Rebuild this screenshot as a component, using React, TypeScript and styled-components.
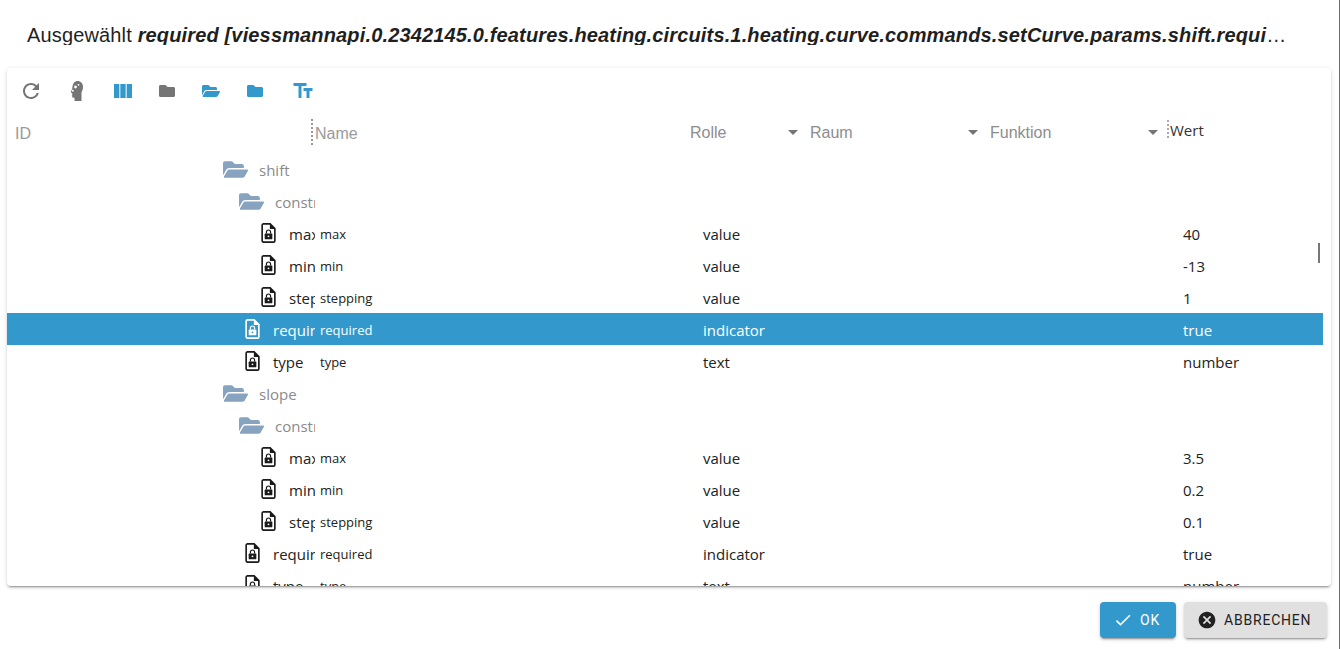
import styled, { createGlobalStyle } from "styled-components";
import {
  MdCheck,
  MdCancel,
  MdRefresh,
  MdTextFields,
  MdViewColumn,
} from "react-icons/md";
import { FaFolder, FaFolderOpen } from "react-icons/fa";

const PRIMARY = "#3399cc";

type TreeRow =
  | { kind: "folder"; depth: number; id: string }
  | {
      kind: "state";
      depth: number;
      id: string;
      name: string;
      role: string;
      value: string;
      selected?: boolean;
    };

const rows: TreeRow[] = [
  { kind: "folder", depth: 0, id: "shift" },
  { kind: "folder", depth: 1, id: "constraints" },
  { kind: "state", depth: 2, id: "max", name: "max", role: "value", value: "40" },
  { kind: "state", depth: 2, id: "min", name: "min", role: "value", value: "-13" },
  { kind: "state", depth: 2, id: "stepping", name: "stepping", role: "value", value: "1" },
  { kind: "state", depth: 1, id: "required", name: "required", role: "indicator", value: "true", selected: true },
  { kind: "state", depth: 1, id: "type", name: "type", role: "text", value: "number" },
  { kind: "folder", depth: 0, id: "slope" },
  { kind: "folder", depth: 1, id: "constraints" },
  { kind: "state", depth: 2, id: "max", name: "max", role: "value", value: "3.5" },
  { kind: "state", depth: 2, id: "min", name: "min", role: "value", value: "0.2" },
  { kind: "state", depth: 2, id: "stepping", name: "stepping", role: "value", value: "0.1" },
  { kind: "state", depth: 1, id: "required", name: "required", role: "indicator", value: "true" },
  { kind: "state", depth: 1, id: "type", name: "type", role: "text", value: "number" },
];

const App = () => {
  return (
    <>
      <GlobalStyle />
      <Dialog>
        <Title>
          Ausgewählt{" "}
          <b>
            <i>required [viessmannapi.0.2342145.0.features.heating.circuits.1.heating.curve.commands.setCurve.params.shift.required]</i>
          </b>
        </Title>
        <Paper>
          <Toolbar>
            <ToolIcon $w={46}><MdRefresh size={24} color="#757575" /></ToolIcon>
            <ToolIcon $w={46}><ExpertIcon /></ToolIcon>
            <ToolIcon $w={46}><MdViewColumn size={24} color={PRIMARY} /></ToolIcon>
            <ToolIcon $w={42}><FaFolder size={16} color="#757575" /></ToolIcon>
            <ToolIcon $w={46}><FaFolderOpen size={18} color={PRIMARY} /></ToolIcon>
            <ToolIcon $w={42}><FaFolder size={16} color={PRIMARY} /></ToolIcon>
            <ToolIcon $w={54}><MdTextFields size={24} color={PRIMARY} /></ToolIcon>
          </Toolbar>
          <HeaderRow>
            <HeaderId>ID</HeaderId>
            <HeaderName>Name</HeaderName>
            <HeaderSelect>Rolle<Caret /></HeaderSelect>
            <HeaderSelect>Raum<Caret /></HeaderSelect>
            <HeaderSelect>Funktion<Caret /></HeaderSelect>
            <HeaderValue>Wert</HeaderValue>
          </HeaderRow>
          <TreeBody>
            {rows.map((row, i) => (
              <Row key={i} $selected={row.kind === "state" && row.selected}>
                <IdCell $depth={row.depth}>
                  {row.kind === "folder" ? (
                    <>
                      <FolderIcon><FaFolderOpen size={25} color="#87a3bf" /></FolderIcon>
                      <FolderLabel>{row.id}</FolderLabel>
                    </>
                  ) : (
                    <>
                      <FileLockIcon selected={row.selected} />
                      <StateLabel>{row.id}</StateLabel>
                    </>
                  )}
                </IdCell>
                {row.kind === "state" && (
                  <>
                    <NameCell>{row.name}</NameCell>
                    <ValueCell>{row.role}</ValueCell>
                    <ValueCell />
                    <ValueCell />
                    <ValueCell>{row.value}</ValueCell>
                  </>
                )}
              </Row>
            ))}
            <ScrollThumb />
          </TreeBody>
        </Paper>
        <Actions>
          <OkButton><MdCheck size={20} />OK</OkButton>
          <CancelButton><MdCancel size={20} color="#212121" />Abbrechen</CancelButton>
        </Actions>
      </Dialog>
    </>
  );
};

export default App;

const ExpertIcon = () => (
  <svg width="24" height="24" viewBox="0 0 24 24" fill="#757575">
    <path d="M12.500 2c3.400 0 5.500 2.500 5.500 6 0 2.300-.7 3.900-1.500 5.200V22H9.500v-3.300H8.400c-.9 0-1.200-.7-1.200-1.500v-2.900l-1.100-.7c-.4-.3-.4-.7-.1-1.100L7.300 9.500C7.400 5 9.300 2 12.500 2z" />
    <circle cx="10.500" cy="8" r="1.400" fill="#fff" />
    <circle cx="7.800" cy="11.800" r="1" fill="#fff" />
    <circle cx="13.500" cy="5.800" r="0.900" fill="#fff" />
  </svg>
);

const FileLockIcon = ({ selected }: { selected?: boolean }) => {
  const ink = selected ? "#ffffff" : "#1a1a1a";
  return (
    <StateIcon width="15" height="20" viewBox="0 0 16 22" fill="none">
      <path
        d="M2.500 1h7.300L15 6.200V19.500a1.500 1.500 0 0 1-1.500 1.500h-11A1.500 1.500 0 0 1 1 19.500v-17A1.500 1.500 0 0 1 2.500 1z"
        stroke={ink}
        strokeWidth="1.800"
      />
      <path d="M9.500 1v5.500H15" fill={ink} />
      <rect x="3.800" y="11.500" width="8.400" height="6.500" rx="0.800" fill={ink} />
      <path d="M5.700 11.500V10a2.300 2.300 0 0 1 4.600 0v1.500" stroke={ink} strokeWidth="1.300" />
      <circle cx="8" cy="14.700" r="1" fill={selected ? PRIMARY : "#fff"} />
    </StateIcon>
  );
};

const GlobalStyle = createGlobalStyle`
  html, body {
    margin: 0;
    padding: 0;
    height: 100%;
    background: #707070;
  }
  #root {
    height: 100%;
  }
`;

const Dialog = styled.div`
  width: 1339px;
  height: 649px;
  background: #fff;
  display: flex;
  flex-direction: column;
  overflow: hidden;
  font-family: "Liberation Sans", Arial, sans-serif;
`;

const Title = styled.div`
  padding: 23px 51px 0 27px;
  height: 45px;
  box-sizing: border-box;
  font-size: 20px;
  letter-spacing: 0.15px;
  line-height: 24px;
  color: #1f1f1f;
  white-space: nowrap;
  overflow: hidden;
  text-overflow: ellipsis;
  flex: none;
`;

const Paper = styled.div`
  position: relative;
  margin: 23px 8px 0 7px;
  height: 518px;
  background: #fff;
  border-radius: 4px;
  box-shadow: 0 3px 1px -2px rgba(0, 0, 0, 0.2), 0 2px 2px rgba(0, 0, 0, 0.14), 0 1px 5px rgba(0, 0, 0, 0.12);
  display: flex;
  flex-direction: column;
  overflow: hidden;
  flex: none;
`;

const Toolbar = styled.div`
  display: flex;
  align-items: center;
  height: 46px;
  padding-left: 1px;
  flex: none;
`;

const ToolIcon = styled.span<{ $w: number }>`
  width: ${(p) => p.$w}px;
  height: 24px;
  display: flex;
  align-items: center;
  justify-content: center;
  flex: none;
`;

const HeaderRow = styled.div`
  display: grid;
  grid-template-columns: 308px 375px 120px 180px 180px 1fr;
  height: 39px;
  align-items: center;
  flex: none;
  font-size: 16px;
  color: #9a9a9a;
`;

const HeaderId = styled.div`
  padding-left: 8px;
`;

const Divider = styled.div`
  position: relative;
  &::before {
    content: "";
    position: absolute;
    left: -4px;
    top: -6px;
    height: 26px;
    border-left: 2px dotted #999;
  }
`;

const HeaderName = styled(Divider)``;

const HeaderSelect = styled.div`
  display: flex;
  align-items: center;
  justify-content: space-between;
  padding-right: 12px;
  color: #8d8d8d;
  position: relative;
  top: -1px;
`;

const Caret = styled.span`
  width: 0;
  height: 0;
  border-left: 5px solid transparent;
  border-right: 5px solid transparent;
  border-top: 5px solid #757575;
`;

const HeaderValue = styled(Divider)`
  font-family: "Open Sans", sans-serif;
  font-size: 15px;
  color: #333;
  top: -4px;
  &::before {
    left: -3px;
    top: 0;
    height: 18px;
    border-left-color: #aaa;
  }
`;

const TreeBody = styled.div`
  flex: 1;
  min-height: 0;
  overflow: hidden;
`;

const Row = styled.div<{ $selected?: boolean }>`
  display: grid;
  grid-template-columns: 308px 388px 120px 180px 180px 1fr;
  height: 32px;
  width: 1316px;
  align-items: center;
  font-family: "Open Sans", sans-serif;
  font-size: 15px;
  color: ${(p) => (p.$selected ? "#fff" : "#222")};
  background: ${(p) => (p.$selected ? PRIMARY : "transparent")};
`;

const IdCell = styled.div<{ $depth: number }>`
  display: flex;
  align-items: center;
  height: 100%;
  overflow: hidden;
  padding-left: ${(p) => 216 + p.$depth * 16}px;
  box-sizing: border-box;
  white-space: nowrap;
`;

const FolderIcon = styled.span`
  width: 25px;
  display: flex;
  flex: none;
  margin-right: 11px;
`;

const FolderLabel = styled.span`
  color: #8a8a8a;
  padding-top: 2px;
`;

const StateIcon = styled.svg`
  flex: none;
  margin-left: 6px;
  margin-right: 13px;
`;

const StateLabel = styled.span`
  padding-top: 2px;
`;

const NameCell = styled.div`
  font-size: 13px;
  padding: 2px 0 0 5px;
`;

const ValueCell = styled.div`
  padding-top: 2px;
`;

const ScrollThumb = styled.div`
  position: absolute;
  left: 1311px;
  top: 175px;
  width: 2px;
  height: 20px;
  background: #777;
`;

const Actions = styled.div`
  display: flex;
  justify-content: flex-end;
  gap: 8px;
  padding: 16px 12px 0 0;
`;

const BaseButton = styled.button`
  height: 36px;
  display: inline-flex;
  align-items: center;
  gap: 7px;
  border: 0;
  border-radius: 4px;
  font-family: Roboto, sans-serif;
  font-size: 14px;
  letter-spacing: 0.8px;
  text-transform: uppercase;
  box-shadow: 0 3px 1px -2px rgba(0, 0, 0, 0.2), 0 2px 2px rgba(0, 0, 0, 0.14), 0 1px 5px rgba(0, 0, 0, 0.12);
`;

const OkButton = styled(BaseButton)`
  width: 76px;
  padding: 0 0 0 13px;
  background: ${PRIMARY};
  color: #fff;
`;

const CancelButton = styled(BaseButton)`
  width: 143px;
  padding: 0 0 0 13px;
  background: #e0e0e0;
  color: #222;
`;
